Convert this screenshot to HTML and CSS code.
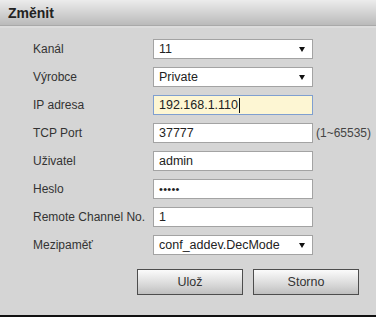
FILE: index.html
```html
<!DOCTYPE html>
<html lang="cs">
<head>
<meta charset="utf-8">
<title>Změnit</title>
<link rel="stylesheet" href="styles.css">
</head>
<body>
<div class="dialog">
  <div class="header">Změnit</div>
  <div class="body">
    <div class="form">
      <div class="label">Kanál</div>
      <div class="field select"><span>11</span><svg class="arrow" width="6" height="5" viewBox="0 0 6 5"><path d="M0 0H6L3 5Z" fill="#111"/></svg></div>
      <div></div>

      <div class="label">Výrobce</div>
      <div class="field select"><span>Private</span><svg class="arrow" width="6" height="5" viewBox="0 0 6 5"><path d="M0 0H6L3 5Z" fill="#111"/></svg></div>
      <div></div>

      <div class="label">IP adresa</div>
      <div class="field focus"><span>192.168.1.110</span><span class="caret"></span></div>
      <div></div>

      <div class="label">TCP Port</div>
      <div class="field"><span>37777</span></div>
      <div class="hint">(1~65535)</div>

      <div class="label">Uživatel</div>
      <div class="field"><span>admin</span></div>
      <div></div>

      <div class="label">Heslo</div>
      <div class="field"><span class="dots">•••••</span></div>
      <div></div>

      <div class="label">Remote Channel No.</div>
      <div class="field"><span>1</span></div>
      <div></div>

      <div class="label">Mezipaměť</div>
      <div class="field select short"><span>conf_addev.DecMode</span><svg class="arrow" width="6" height="5" viewBox="0 0 6 5"><path d="M0 0H6L3 5Z" fill="#111"/></svg></div>
      <div></div>
    </div>
    <div class="buttons">
      <button class="btn">Ulož</button>
      <button class="btn">Storno</button>
    </div>
  </div>
</div>
</body>
</html>
```
FILE: styles.css
```css
* { box-sizing: border-box; }
html, body { margin: 0; padding: 0; }
body {
  width: 376px;
  height: 317px;
  overflow: hidden;
  background: #d5d5d5;
  font-family: "Liberation Sans", Arial, sans-serif;
  color: #333;
}
.dialog {
  width: 376px;
  height: 317px;
  display: flex;
  flex-direction: column;
  border-bottom: 2px solid #111;
}
.header {
  height: 26px;
  flex: none;
  background: linear-gradient(#ececec, #bababa);
  border-bottom: 1px solid #a9a9a9;
  font-weight: bold;
  font-size: 14px;
  color: #222;
  padding: 5px 0 0 8px;
  line-height: 16px;
}
.body {
  flex: 1;
  border-top: 2px solid #dcdcdc;
  padding: 11px 0 0 33px;
}
.form {
  display: grid;
  grid-template-columns: 120px 160px auto;
  grid-auto-rows: 20px;
  row-gap: 8px;
  align-items: center;
}
.label {
  font-size: 12px;
  color: #333;
  white-space: nowrap;
}
.field {
  height: 20px;
  background: #fff;
  border: 1px solid #a3a3a3;
  font-size: 12.5px;
  color: #222;
  padding: 0 0 0 5px;
  display: flex;
  align-items: center;
  position: relative;
}
.select { padding-right: 7px; justify-content: space-between; }
.short { width: 160px; }
.arrow { flex: none; }
.focus {
  background: #fdf6d3;
  border-color: #7f9fd0;
}
.caret {
  width: 1px;
  height: 15px;
  background: #111;
  margin-left: 1px;
}
.dots { font-size: 11px; letter-spacing: 0.3px; }
.hint {
  font-size: 12px;
  color: #444;
  padding-left: 3px;
  white-space: nowrap;
}
.buttons {
  display: flex;
  gap: 10px;
  margin: 14px 0 0 104px;
}
.btn {
  width: 106px;
  height: 26px;
  border: 1px solid #4d4d4d;
  background: linear-gradient(#fbfbfb, #d9d9d9 60%, #bfbfbf);
  font-family: "Liberation Sans", Arial, sans-serif;
  font-size: 12.5px;
  color: #333;
  padding: 0;
}
```
